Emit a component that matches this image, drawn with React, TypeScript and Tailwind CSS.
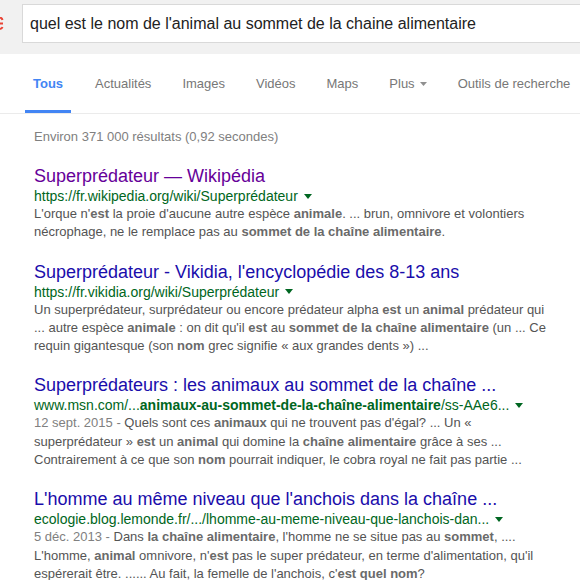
import React from 'react'

type Part = string | { b: string }

const Line = ({ parts, date }: { parts: Part[]; date?: string }) => (
  <div className="whitespace-nowrap">
    {date && <span className="text-[#808080]">{date}</span>}
    {parts.map((p, i) =>
      typeof p === 'string' ? (
        <span key={i}>{p}</span>
      ) : (
        <b key={i} className="font-bold text-[#6a6a6a]">
          {p.b}
        </b>
      )
    )}
  </div>
)

const Caret = ({ color }: { color: string }) => (
  <svg width="8" height="5" viewBox="0 0 8 5" className="ml-[6px] inline-block align-middle">
    <path d="M0 0h8L4 5z" fill={color} />
  </svg>
)

type Result = {
  title: string
  visited?: boolean
  url: Part[]
  lines: { date?: string; parts: Part[] }[]
}

const results: Result[] = [
  {
    title: 'Superprédateur — Wikipédia',
    visited: true,
    url: ['https://fr.wikipedia.org/wiki/Superprédateur'],
    lines: [
      {
        parts: [
          "L'orque n'",
          { b: 'est' },
          " la proie d'aucune autre espèce ",
          { b: 'animale' },
          '. ... brun, omnivore et volontiers',
        ],
      },
      {
        parts: ['nécrophage, ne le remplace pas au ', { b: 'sommet de la chaîne alimentaire' }, '.'],
      },
    ],
  },
  {
    title: "Superprédateur - Vikidia, l'encyclopédie des 8-13 ans",
    url: ['https://fr.vikidia.org/wiki/Superprédateur'],
    lines: [
      {
        parts: [
          'Un superprédateur, surprédateur ou encore prédateur alpha ',
          { b: 'est' },
          ' un ',
          { b: 'animal' },
          ' prédateur qui',
        ],
      },
      {
        parts: [
          '... autre espèce ',
          { b: 'animale' },
          " : on dit qu'il ",
          { b: 'est' },
          ' au ',
          { b: 'sommet de la chaîne alimentaire' },
          ' (un ... Ce',
        ],
      },
      {
        parts: ['requin gigantesque (son ', { b: 'nom' }, ' grec signifie « aux grandes dents ») ...'],
      },
    ],
  },
  {
    title: 'Superprédateurs : les animaux au sommet de la chaîne ...',
    url: ['www.msn.com/...', { b: 'animaux-au-sommet-de-la-chaîne-alimentaire' }, '/ss-AAe6...'],
    lines: [
      {
        date: '12 sept. 2015 - ',
        parts: ['Quels sont ces ', { b: 'animaux' }, " qui ne trouvent pas d'égal? ... Un «"],
      },
      {
        parts: [
          'superprédateur » ',
          { b: 'est' },
          ' un ',
          { b: 'animal' },
          ' qui domine la ',
          { b: 'chaîne alimentaire' },
          ' grâce à ses ...',
        ],
      },
      {
        parts: [
          'Contrairement à ce que son ',
          { b: 'nom' },
          ' pourrait indiquer, le cobra royal ne fait pas partie ...',
        ],
      },
    ],
  },
  {
    title: "L'homme au même niveau que l'anchois dans la chaîne ...",
    url: ['ecologie.blog.lemonde.fr/.../lhomme-au-meme-niveau-que-lanchois-dan...'],
    lines: [
      {
        date: '5 déc. 2013 - ',
        parts: ['Dans ', { b: 'la chaîne alimentaire' }, ", l'homme ne se situe pas au ", { b: 'sommet' }, ', ....'],
      },
      {
        parts: [
          "L'homme, ",
          { b: 'animal' },
          " omnivore, n'",
          { b: 'est' },
          " pas le super prédateur, en terme d'alimentation, qu'il",
        ],
      },
      {
        parts: ["espérerait être. ...... Au fait, la femelle de l'anchois, c'", { b: 'est quel nom' }, '?'],
      },
    ],
  },
]

const tabs = ['Actualités', 'Images', 'Vidéos', 'Maps']

export default function App() {
  return (
    <div className="h-[580px] w-[580px] overflow-hidden bg-white font-['Liberation_Sans',Arial,sans-serif]">
      {/* header with search box */}
      <div className="flex h-[54px] items-start bg-[#f1f1f1] pt-[4px]">
        <div className="flex h-[39px] w-[22px] items-center">
          <svg width="4" height="14" viewBox="0 0 4 14">
            <path d="M0 0.5q2 0.5 2.5 2.5" stroke="#ea4335" strokeWidth="2" fill="none" />
            <path d="M0 6.5h3M0 12q2-0.5 2.5-2" stroke="#ea4335" strokeWidth="2" fill="none" />
          </svg>
        </div>
        <div className="flex h-[39px] flex-1 items-center border border-[#d9d9d9] border-r-0 bg-white pl-[7px] text-[16px] text-[#222]">
          quel est le nom de l'animal au sommet de la chaine alimentaire
        </div>
      </div>

      {/* tabs */}
      <div className="flex h-[60px] items-stretch border-b border-[#ebebeb] pl-[25px] text-[13px] text-[#777]">
        <div className="flex w-[46px] items-center border-b-[3px] border-[#4285f4] pl-[8px] pt-[3px] font-bold text-[#4285f4]">
          Tous
        </div>
        <div className="ml-[24px] flex gap-[31px]">
          {tabs.map((t) => (
            <div key={t} className="flex items-center">
              {t}
            </div>
          ))}
          <div className="flex items-center">
            Plus
            <svg width="7" height="4" viewBox="0 0 7 4" className="ml-[5px]">
              <path d="M0 0h7L3.5 4z" fill="#909090" />
            </svg>
          </div>
          <div className="flex items-center">Outils de recherche</div>
        </div>
      </div>

      <div className="pl-[34px]">
        <div className="mt-[15px] text-[13px] leading-[16px] text-[#808080]">
          Environ 371 000 résultats (0,92 secondes)
        </div>

        <div className="mt-[20px] flex flex-col gap-[19px]">
          {results.map((r) => (
            <div key={r.title}>
              <div
                className={`whitespace-nowrap text-[18px] leading-[22px] ${
                  r.visited ? 'text-[#660099]' : 'text-[#1a0dab]'
                }`}
              >
                {r.title}
              </div>
              <div className="flex items-center whitespace-nowrap text-[14px] leading-[18px] text-[#006621]">
                <span>
                  {r.url.map((p, i) =>
                    typeof p === 'string' ? <span key={i}>{p}</span> : <b key={i}>{p.b}</b>
                  )}
                </span>
                <Caret color="#006621" />
              </div>
              <div className="text-[13px] leading-[18.3px] text-[#545454]">
                {r.lines.map((l, i) => (
                  <Line key={i} parts={l.parts} date={l.date} />
                ))}
              </div>
            </div>
          ))}
        </div>
      </div>
    </div>
  )
}
